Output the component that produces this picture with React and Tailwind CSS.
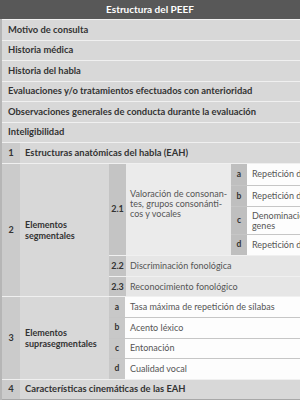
import React from "react";

const F = { fontFamily: "Lato, 'Open Sans', sans-serif" };

function BoldRow({ children }) {
  return (
    <div className="h-[20.5px] border-t border-[#f0f0f0] bg-[#d8d8d8] flex items-center pl-[6px] font-bold text-[9.4px] text-[#333] whitespace-nowrap">
      {children}
    </div>
  );
}

function LetterRow({ letter, h, first, letterBg, children }) {
  return (
    <div
      className={`flex ${first ? "" : "border-t border-[#c6c6c6]"}`}
      style={{ height: h }}
    >
      <div className={`w-[16px] shrink-0 flex items-center justify-center font-bold text-[8.5px] text-[#333] ${letterBg}`}>
        {letter}
      </div>
      <div className="flex-1 bg-[#fdfdfd] flex items-center pl-[5px] text-[9px] text-[#555] whitespace-nowrap overflow-hidden leading-[10px]">
        {children}
      </div>
    </div>
  );
}

export default function App() {
  return (
    <div className="w-[300px] h-[400px] overflow-hidden bg-white" style={F}>
      <div className="h-[19px] bg-[#585858] flex items-center justify-center text-white font-bold text-[10px]">
        Estructura del PEEF
      </div>
      <div className="border-l-2 border-[#b6b6b6]">
        <BoldRow>Motivo de consulta</BoldRow>
        <BoldRow>Historia médica</BoldRow>
        <BoldRow>Historia del habla</BoldRow>
        <BoldRow>Evaluaciones y/o tratamientos efectuados con anterioridad</BoldRow>
        <BoldRow>Observaciones generales de conducta durante la evaluación</BoldRow>
        <BoldRow>Inteligibilidad</BoldRow>

        {/* Row 1 */}
        <div className="h-[20.5px] border-t border-[#f0f0f0] flex font-bold text-[9.4px] text-[#333]">
          <div className="w-[18px] shrink-0 bg-[#cbcbcb] flex items-center justify-center">1</div>
          <div className="flex-1 bg-[#d8d8d8] flex items-center pl-[5px] whitespace-nowrap">
            Estructuras anatómicas del habla (EAH)
          </div>
        </div>

        {/* Section 2 */}
        <div className="border-t border-[#f0f0f0] flex">
          <div className="w-[18px] shrink-0 bg-[#cbcbcb] flex items-center justify-center font-bold text-[9px] text-[#333]">2</div>
          <div className="w-[89px] shrink-0 bg-[#d8d8d8] flex items-center pl-[5px] font-bold text-[9px] text-[#333] leading-[11px]">
            Elementos<br />segmentales
          </div>
          <div className="flex-1 flex flex-col">
            <div className="flex">
              <div className="w-[17px] shrink-0 bg-[#c4c4c4] flex items-center justify-center font-bold text-[9px] text-[#333]">2.1</div>
              <div className="w-[105px] shrink-0 bg-[#ebebeb] flex items-center pl-[4px] pb-[10px] text-[9px] text-[#555] leading-[10px] whitespace-nowrap">
                Valoración de consonan-<br />tes, grupos consonánti-<br />cos y vocales
              </div>
              <div className="flex-1 flex flex-col min-w-0">
                <LetterRow letter="a" h="21.5px" first letterBg="bg-[#bfbfbf]">Repetición de palabras</LetterRow>
                <LetterRow letter="b" h="21px" letterBg="bg-[#bfbfbf]">Repetición de frases</LetterRow>
                <LetterRow letter="c" h="28px" letterBg="bg-[#bfbfbf]">
                  <span>Denominación de imá-<br />genes</span>
                </LetterRow>
                <LetterRow letter="d" h="20.5px" letterBg="bg-[#bfbfbf]">Repetición de logotomas</LetterRow>
              </div>
            </div>
            <div className="h-[21.5px] border-t border-[#f0f0f0] flex">
              <div className="w-[17px] shrink-0 bg-[#c4c4c4] flex items-center justify-center font-bold text-[9px] text-[#333]">2.2</div>
              <div className="flex-1 bg-[#e6e6e6] flex items-center pl-[4px] text-[9px] text-[#555] whitespace-nowrap">Discriminación fonológica</div>
            </div>
            <div className="h-[20px] border-t border-[#f0f0f0] flex">
              <div className="w-[17px] shrink-0 bg-[#c4c4c4] flex items-center justify-center font-bold text-[9px] text-[#333]">2.3</div>
              <div className="flex-1 bg-[#e6e6e6] flex items-center pl-[4px] text-[9px] text-[#555] whitespace-nowrap">Reconocimiento fonológico</div>
            </div>
          </div>
        </div>

        {/* Section 3 */}
        <div className="border-t border-[#f0f0f0] flex">
          <div className="w-[18px] shrink-0 bg-[#cbcbcb] flex items-center justify-center font-bold text-[9px] text-[#333]">3</div>
          <div className="w-[89px] shrink-0 bg-[#d8d8d8] flex items-center pl-[5px] font-bold text-[9px] text-[#333] leading-[11px]">
            Elementos<br />suprasegmentales
          </div>
          <div className="flex-1 flex flex-col">
            <LetterRow letter="a" h="20px" first letterBg="bg-[#c8c8c8]">Tasa máxima de repetición de sílabas</LetterRow>
            <LetterRow letter="b" h="20.5px" letterBg="bg-[#c8c8c8]">Acento léxico</LetterRow>
            <LetterRow letter="c" h="20.5px" letterBg="bg-[#c8c8c8]">Entonación</LetterRow>
            <LetterRow letter="d" h="20.5px" letterBg="bg-[#c8c8c8]">Cualidad vocal</LetterRow>
          </div>
        </div>

        {/* Row 4 */}
        <div className="h-[20px] border-t border-[#f0f0f0] flex font-bold text-[9.4px] text-[#333]">
          <div className="w-[18px] shrink-0 bg-[#cbcbcb] flex items-center justify-center">4</div>
          <div className="flex-1 bg-[#d8d8d8] flex items-center pl-[5px] whitespace-nowrap">
            Características cinemáticas de las EAH
          </div>
        </div>
        <div className="h-[2px] bg-[#a8a8a8]" />
      </div>
    </div>
  );
}
